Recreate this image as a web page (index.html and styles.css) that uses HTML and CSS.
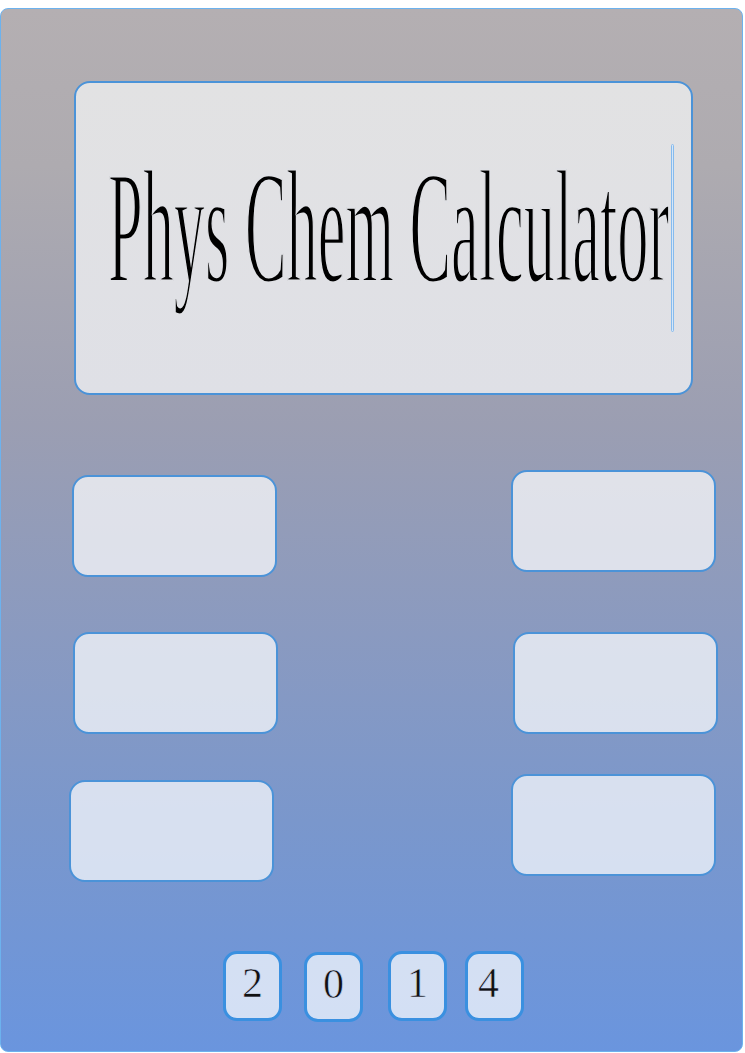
FILE: index.html
```html
<!DOCTYPE html>
<html>
<head>
<meta charset="utf-8">
<title>Phys Chem Calculator</title>
<link rel="stylesheet" href="styles.css">
</head>
<body>
<div class="panel">
  <div class="display">
    <div class="title">Phys Chem Calculator</div>
    <span class="caret"></span>
  </div>
  <div class="keys">
    <div class="col col-left">
      <div class="key kl1"></div>
      <div class="key kl2"></div>
      <div class="key kl3"></div>
    </div>
    <div class="col col-right">
      <div class="key kr1"></div>
      <div class="key kr2"></div>
      <div class="key kr3"></div>
    </div>
  </div>
  <div class="year">
    <div class="digit d1">2</div>
    <div class="digit d2">0</div>
    <div class="digit d3">1</div>
    <div class="digit d4">4</div>
  </div>
</div>
</body>
</html>
```
FILE: styles.css
```css
html, body {
  margin: 0;
  padding: 0;
  background: #ffffff;
}
body {
  padding-top: 8px;
}
.panel {
  box-sizing: border-box;
  width: 743px;
  height: 1044px;
  border: 1px solid #6cb2ee;
  border-radius: 8px;
  background: linear-gradient(180deg, #b4afb2 0%, #aeabb0 15%, #9b9eb2 40%, #8a9ac0 60%, #7a97cc 78%, #6a95de 100%);
  padding-top: 72px;
  overflow: hidden;
}
.display {
  position: relative;
  box-sizing: border-box;
  margin-left: 73px;
  width: 619px;
  height: 314px;
  border: 2px solid #4b93d8;
  border-radius: 16px;
  background: linear-gradient(180deg, #e2e2e3 0%, #dfe0e6 100%);
  padding: 63px 0 0 32px;
  overflow: hidden;
}
.title {
  font-family: "Liberation Serif", serif;
  font-size: 162px;
  line-height: 162px;
  color: #000;
  white-space: nowrap;
  -webkit-text-stroke: 3px #e0e1e5;
  transform: scaleX(0.385);
  transform-origin: 0 0;
}
.caret {
  position: absolute;
  left: 595px;
  top: 61px;
  width: 1px;
  height: 186px;
  border: 1px solid #86bbee;
  border-radius: 2px;
  background: #d6e6f7;
}
.keys {
  display: flex;
  margin-top: 75px;
}
.col {
  display: flex;
  flex-direction: column;
}
.key {
  box-sizing: border-box;
  width: 205px;
  height: 102px;
  border: 2px solid #4b93d8;
  border-radius: 16px;
  background: rgba(255, 255, 255, 0.7);
}
.col-left {
  margin-left: 71px;
  margin-top: 5px;
}
.kl2 { margin-top: 55px; margin-left: 1px; }
.kl3 { margin-top: 46px; margin-left: -3px; }
.col-right {
  margin-left: 233px;
}
.kr2 { margin-top: 60px; margin-left: 2px; }
.kr3 { margin-top: 40px; }
.year {
  display: flex;
  margin-top: 69px;
  padding-left: 222px;
}
.digit {
  box-sizing: border-box;
  width: 59px;
  height: 70px;
  border: 3px solid #3a90e0;
  border-radius: 14px;
  background: rgba(255, 255, 255, 0.7);
  font-family: "Liberation Serif", serif;
  font-size: 42px;
  line-height: 58px;
  text-align: center;
  color: #111;
  -webkit-text-stroke: 0.6px #d4dff2;
}
.d2 { margin-left: 22px; margin-top: 1px; }
.d3 { margin-left: 25px; }
.d4 { margin-left: 18px; padding-right: 12px; }
```
